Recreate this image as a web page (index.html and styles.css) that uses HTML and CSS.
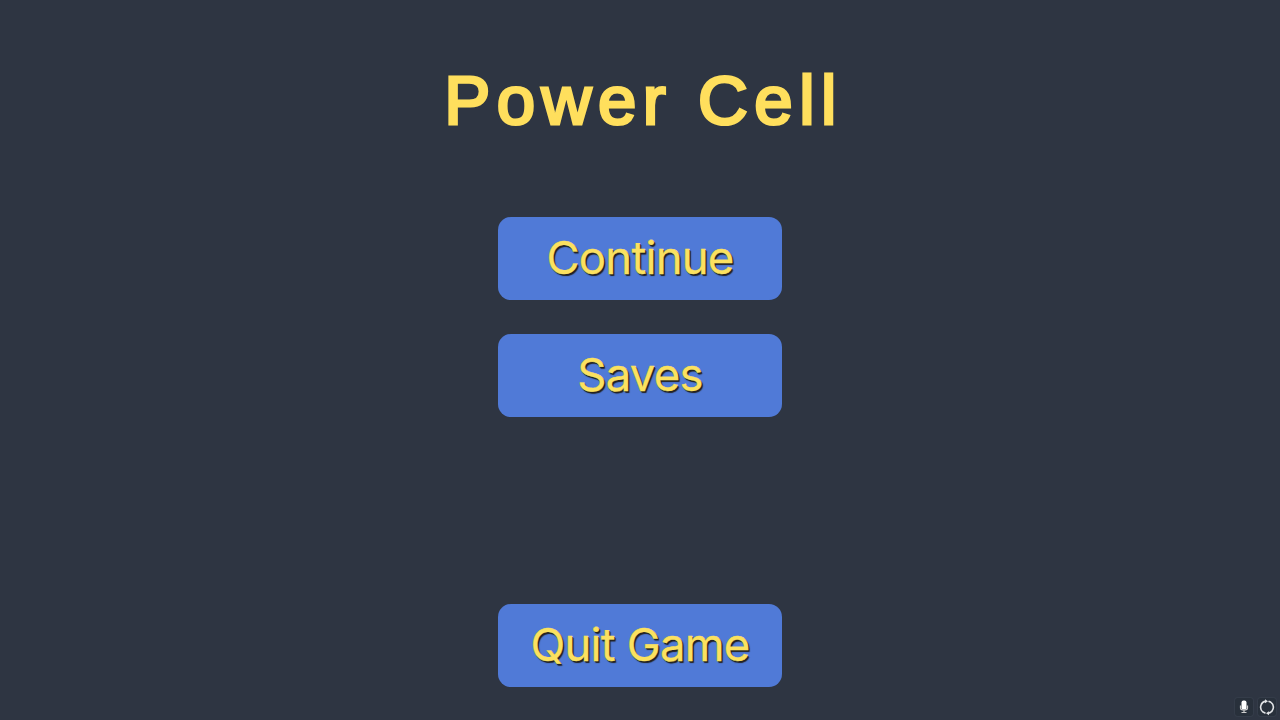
FILE: index.html
```html
<!DOCTYPE html>
<html>
	<head>
		<meta charset="utf-8">
		<title>Power Cell</title>
		<link rel="stylesheet" href="styles.css">
	</head>
	<body>
		<h1 class="title">Power Cell</h1>
		<div class="menu">
			<button class="btn">Continue</button>
			<button class="btn">Saves</button>
			<button class="btn quit">Quit Game</button>
		</div>
		<div class="tray">
			<span class="tray-item">
				<svg width="18" height="18" viewBox="0 0 18 18">
					<rect x="6.500" y="2.500" width="5" height="9" rx="2" fill="#fff"/>
					<path d="M5.500 7.500v2.500q0 2 3.500 2t3.500-2V7.500M9 12v2.500M6.500 14.500h5" fill="none" stroke="#ccc" stroke-width="1.200"/>
				</svg>
			</span>
			<span class="tray-item">
				<svg width="18" height="18" viewBox="0 0 18 18">
					<path d="M8 3.100a6.200 6.200 0 0 0-3 11M10 15.300a6.200 6.200 0 0 0 3-11M5 14.100l2.500 1.100M13 4.300l-2.500-1.100" fill="none" stroke="#e0e2e5" stroke-width="1.600"/>
					<path d="M7 1.200l3 2-3 2zM11 13.200l-3 2 3 2z" fill="#e0e2e5"/>
				</svg>
			</span>
		</div>
	</body>
</html>
```
FILE: styles.css
```css
*{margin: 0; padding: 0; box-sizing: border-box;}
body{height: 720px; overflow: hidden; background: #2e3542; font-family: "Liberation Sans", sans-serif; display: flex; flex-direction: column; align-items: center;}
.title{color: #ffdf5d; font-size: 69px; font-weight: normal; line-height: 80px; letter-spacing: 6.5px; -webkit-text-stroke: 3px #ffdf5d; stroke-linejoin: round; margin-top: 61px; padding-left: 7px; white-space: nowrap;}
.menu{display: flex; flex-direction: column; align-items: center; gap: 34px; margin-top: 76px;}
.btn{width: 284px; height: 83px; padding-bottom: 3px; border: none; border-radius: 13px; background: #507ad7; color: #fbe160; font-family: Inter, sans-serif; font-size: 45.5px; letter-spacing: -0.8px; -webkit-text-stroke: 0.3px #fbe160; text-shadow: 1px 1px 0 #222, 1.5px 1.5px 1px #222;}
.quit{margin-top: 153px;}
.tray{position: absolute; right: 4px; bottom: 4px; display: flex; gap: 5px;}
.tray-item{width: 18px; height: 18px; background: #28303b; border-radius: 3px; box-shadow: 0 0 0 1px #343c49;}
```
